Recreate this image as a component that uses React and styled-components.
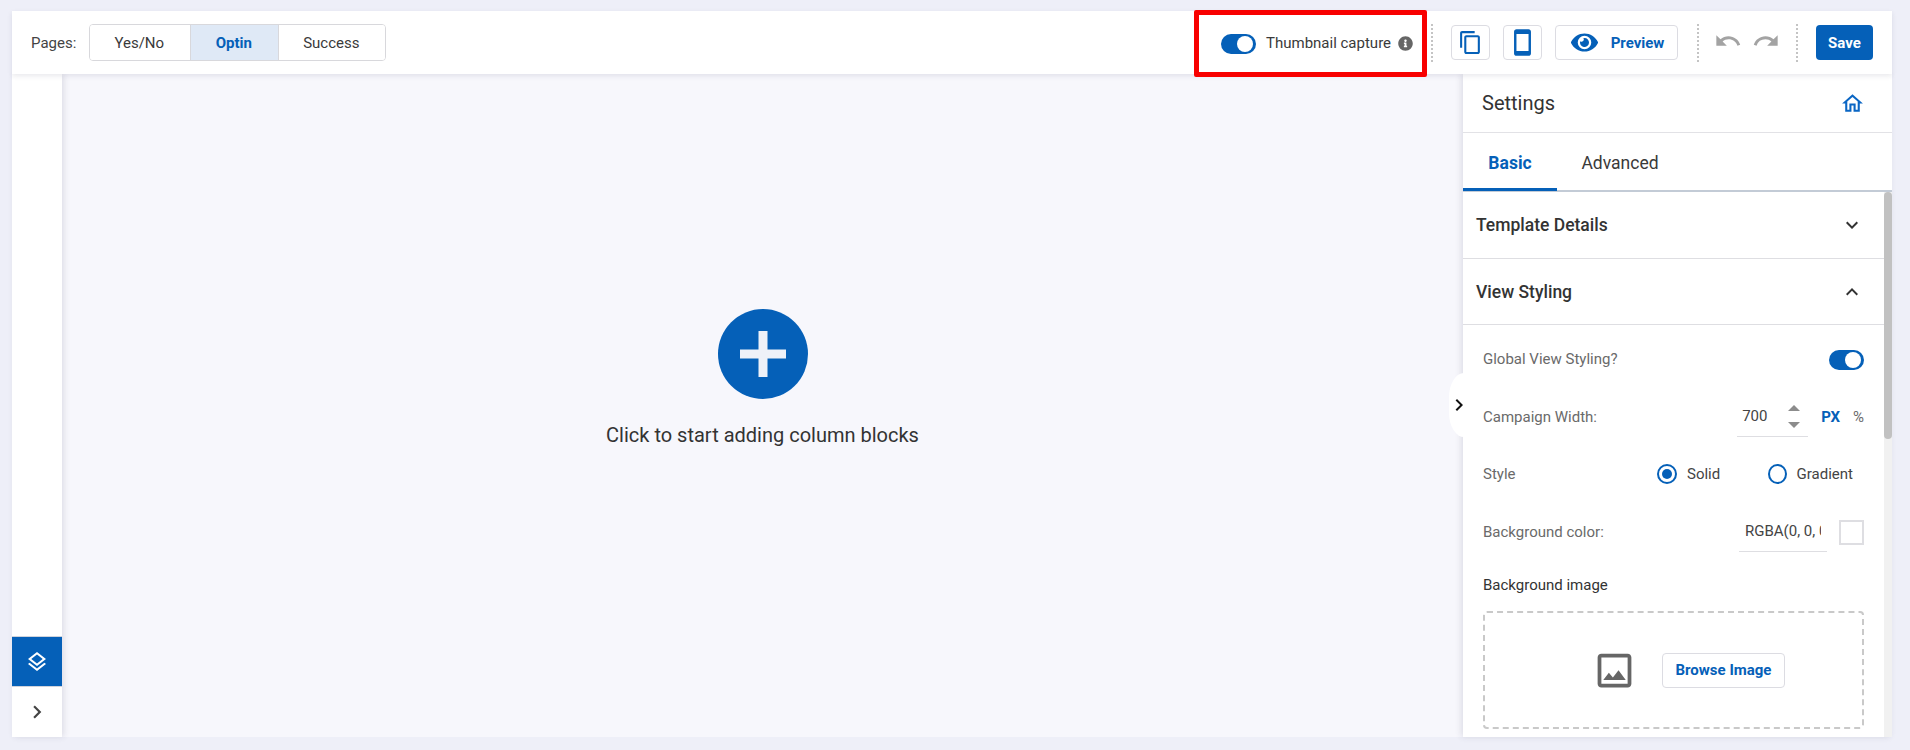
import React from "react";
import styled, { createGlobalStyle } from "styled-components";
import {
  MdContentCopy,
  MdSmartphone,
  MdUndo,
  MdRedo,
  MdOutlineHome,
  MdKeyboardArrowDown,
  MdKeyboardArrowUp,
  MdOutlineImage,
  MdChevronRight,
  MdOutlineLayers,
} from "react-icons/md";
import { FaEye, FaInfoCircle } from "react-icons/fa";

const GlobalStyle = createGlobalStyle`
  html, body {
    margin: 0;
    padding: 0;
    height: 100%;
    overflow: hidden;
  }
  body {
    font-family: Roboto, "Liberation Sans", sans-serif;
    background: #eeeff8;
    color: #333;
  }
  * { box-sizing: border-box; }
`;

const Page = styled.div`
  width: 1910px;
  height: 750px;
  padding: 11px 18px 13px 12px;
  display: flex;
  flex-direction: column;
`;

const TopBar = styled.header`
  height: 63px;
  flex: none;
  background: #fff;
  display: flex;
  align-items: center;
  padding: 0 19px;
  position: relative;
  z-index: 3;
  box-shadow: 0 2px 5px rgba(40, 40, 70, 0.1);
`;

const PagesLabel = styled.span`
  font-size: 15px;
  color: #444;
  margin-right: 13px;
`;

const Segments = styled.div`
  display: flex;
  height: 37px;
  border: 1px solid #d8d8dc;
  border-radius: 4px;
  overflow: hidden;
`;

const Segment = styled.div`
  width: ${(p) => p.$w}px;
  padding-right: 2px;
  display: flex;
  align-items: center;
  justify-content: center;
  font-size: 15px;
  color: ${(p) => (p.$active ? "#0560b8" : "#3a3a3a")};
  font-weight: ${(p) => (p.$active ? 700 : 400)};
  background: ${(p) => (p.$active ? "#dfe9f6" : "#fff")};
  border-left: ${(p) => (p.$first ? "none" : "1px solid #d8d8dc")};
`;

const RightTools = styled.div`
  margin-left: auto;
  display: flex;
  align-items: center;
`;

const ThumbGroup = styled.div`
  position: relative;
  width: 210px;
  display: flex;
  align-items: center;
  font-size: 15px;
  color: #3a3a3a;
  span + span {
    margin-left: 10px;
  }
  svg {
    color: #666;
    flex: none;
    margin-left: 7px;
    margin-top: 1px;
  }
`;

const Highlight = styled.div`
  position: absolute;
  left: -27px;
  top: -21px;
  width: 233px;
  height: 67px;
  border: 5px solid #f80000;
  border-radius: 2px;
  pointer-events: none;
`;

const Toggle = styled.span`
  width: 35px;
  height: 20px;
  margin-top: 3px;
  border-radius: 10px;
  background: #0560b8;
  position: relative;
  flex: none;
  &::after {
    content: "";
    position: absolute;
    right: 3px;
    top: 2px;
    width: 16px;
    height: 16px;
    border-radius: 50%;
    background: #fff;
  }
`;

const Dots = styled.span`
  width: 0;
  height: 38px;
  border-left: 2px dotted #c4c4c4;
  margin: ${(p) => p.$margin};
  flex: none;
`;

const ToolButton = styled.button`
  width: ${(p) => p.$w || 39}px;
  height: 35px;
  padding: 0 0 0 ${(p) => p.$pl || 0}px;
  margin-right: ${(p) => p.$mr || 0}px;
  background: #fff;
  border: 1px solid #dcdce2;
  border-radius: 4px;
  color: #0560b8;
  display: flex;
  align-items: center;
  justify-content: center;
  gap: 13px;
  font-family: inherit;
  font-size: 15px;
  font-weight: 700;
`;

const HistoryIcons = styled.div`
  display: flex;
  gap: 10px;
  color: #a3a3a3;
  margin-top: -4px;
`;

const SaveButton = styled.button`
  width: 57px;
  height: 35px;
  border: none;
  border-radius: 4px;
  background: #0560b8;
  color: #fff;
  font-family: inherit;
  font-size: 15px;
  font-weight: 700;
  padding: 0;
`;

const Body = styled.div`
  flex: 1;
  display: flex;
  min-height: 0;
`;

const LeftRail = styled.aside`
  width: 50px;
  flex: none;
  background: #fff;
  display: flex;
  flex-direction: column;
  justify-content: flex-end;
  box-shadow: 2px 0 6px rgba(40, 40, 70, 0.12);
  position: relative;
  z-index: 1;
`;

const RailButton = styled.div`
  height: ${(p) => (p.$active ? 51 : 50)}px;
  display: flex;
  align-items: center;
  justify-content: center;
  background: ${(p) => (p.$active ? "#0560b8" : "#fff")};
  color: ${(p) => (p.$active ? "#fff" : "#444")};
  border-top: ${(p) => (p.$active ? "1px solid #cfd3dc" : "none")};
  border-bottom: ${(p) => (p.$active ? "1px solid #cfd3dc" : "none")};
`;

const Canvas = styled.main`
  flex: 1;
  background: #f7f7fc;
  display: flex;
  flex-direction: column;
  align-items: center;
  padding-top: 235px;
`;

const AddCircle = styled.div`
  width: 90px;
  height: 90px;
  border-radius: 50%;
  background: #0560b8;
  display: flex;
  align-items: center;
  justify-content: center;
`;

const CanvasHint = styled.p`
  margin: 24px 0 0;
  font-size: 20px;
  line-height: 24px;
  color: #333;
`;

const SettingsPanel = styled.aside`
  width: 429px;
  flex: none;
  background: #fff;
  display: flex;
  flex-direction: column;
  position: relative;
  z-index: 2;
  box-shadow: -2px 0 6px rgba(40, 40, 70, 0.12);
`;

const CollapseHandle = styled.div`
  position: absolute;
  left: -14px;
  top: 299px;
  width: 15px;
  height: 64px;
  background: #fff;
  border-radius: 16px 0 0 16px / 26px 0 0 26px;
  display: flex;
  align-items: center;
  justify-content: center;
  color: #111;
  svg {
    flex: none;
    margin-left: 5px;
  }
`;

const PanelHead = styled.div`
  height: 59px;
  flex: none;
  display: flex;
  align-items: center;
  justify-content: space-between;
  padding: 0 27px 0 19px;
  border-bottom: 1px solid #e2e2e6;
  font-size: 20px;
  color: #333;
  svg {
    color: #0a66c4;
  }
`;

const Tabs = styled.div`
  height: 59px;
  flex: none;
  display: flex;
  border-bottom: 2px solid #c3cbd6;
`;

const Tab = styled.div`
  width: ${(p) => p.$w}px;
  height: 58px;
  padding-top: 4px;
  display: flex;
  align-items: center;
  justify-content: center;
  font-size: 17.5px;
  font-weight: ${(p) => (p.$active ? 700 : 400)};
  color: ${(p) => (p.$active ? "#0560b8" : "#3a3a3a")};
  border-bottom: 3px solid ${(p) => (p.$active ? "#0560b8" : "transparent")};
`;

const ScrollArea = styled.div`
  flex: 1;
  display: flex;
  min-height: 0;
`;

const PanelContent = styled.div`
  flex: 1;
  min-width: 0;
`;

const ScrollTrack = styled.div`
  width: 8px;
  flex: none;
  background: #f1f1f1;
`;

const ScrollThumb = styled.div`
  height: 247px;
  background: #c1c1c1;
  border-radius: 4px;
`;

const Accordion = styled.div`
  height: ${(p) => p.$h}px;
  display: flex;
  align-items: center;
  justify-content: space-between;
  padding: 0 20px 0 13px;
  border-bottom: 1px solid #dedee2;
  font-size: 17.5px;
  font-weight: 500;
  color: #333;
`;

const Fields = styled.div`
  padding: 0 20px;
`;

const Row = styled.div`
  height: ${(p) => p.$h}px;
  padding-top: ${(p) => p.$pt || 0}px;
  display: flex;
  align-items: center;
  justify-content: space-between;
`;

const FieldLabel = styled.span`
  font-size: 15px;
  color: ${(p) => (p.$dark ? "#333" : "#6a6a6a")};
`;

const Controls = styled.div`
  display: flex;
  align-items: center;
  margin-right: ${(p) => p.$mr || 0}px;
`;

const NumberBox = styled.div`
  width: 71px;
  height: 40px;
  border-bottom: 1px solid #dedee2;
  display: flex;
  align-items: center;
  justify-content: space-between;
  padding: 0 8px 0 5px;
  font-size: 15px;
  color: #444;
  margin-right: 13px;
`;

const Spinner = styled.div`
  display: flex;
  flex-direction: column;
  gap: 11px;
`;

const Arrow = styled.span`
  width: 0;
  height: 0;
  border-left: 6px solid transparent;
  border-right: 6px solid transparent;
  ${(p) =>
    p.$up ? "border-bottom: 6px solid #8c8c8c;" : "border-top: 6px solid #8c8c8c;"}
`;

const Unit = styled.span`
  font-size: 15px;
  font-weight: ${(p) => (p.$active ? 700 : 400)};
  color: ${(p) => (p.$active ? "#0560b8" : "#6a6a6a")};
  margin-left: ${(p) => p.$ml || 0}px;
`;

const RadioOption = styled.label`
  display: flex;
  align-items: center;
  gap: 10px;
  width: ${(p) => p.$w}px;
  font-size: 15px;
  color: #444;
`;

const Radio = styled.span`
  width: 20px;
  height: 20px;
  border-radius: 50%;
  border: 2px solid #0560b8;
  display: flex;
  align-items: center;
  justify-content: center;
  &::after {
    content: "";
    width: 10px;
    height: 10px;
    border-radius: 50%;
    background: ${(p) => (p.$on ? "#0560b8" : "transparent")};
  }
`;

const ColorValue = styled.div`
  width: 88px;
  height: 39px;
  padding: 0 6px;
  border-bottom: 1px solid #dedee2;
  margin-right: 12px;
`;

const ColorText = styled.div`
  font-size: 15px;
  line-height: 36px;
  color: #444;
  overflow: hidden;
  white-space: nowrap;
`;

const Swatch = styled.span`
  width: 25px;
  height: 25px;
  border: 2px solid #dedee2;
  background: #fff;
`;

const DropZone = styled.div`
  height: 118px;
  border: 2px dashed #c9c9c9;
  border-radius: 4px;
  display: flex;
  align-items: center;
  justify-content: center;
  gap: 25px;
  padding-left: 30px;
  svg {
    color: #666;
  }
`;

const BrowseButton = styled.button`
  width: 123px;
  height: 35px;
  padding: 0;
  background: #fff;
  border: 1px solid #dcdce2;
  border-radius: 4px;
  color: #0560b8;
  font-family: inherit;
  font-size: 15px;
  font-weight: 700;
`;

export default function App() {
  return (
    <>
      <GlobalStyle />
      <Page>
        <TopBar>
          <PagesLabel>Pages:</PagesLabel>
          <Segments>
            <Segment $w={100} $first>Yes/No</Segment>
            <Segment $w={88} $active>Optin</Segment>
            <Segment $w={107}>Success</Segment>
          </Segments>
          <RightTools>
            <ThumbGroup>
              <Toggle />
              <span>Thumbnail capture</span>
              <FaInfoCircle size={15} />
              <Highlight />
            </ThumbGroup>
            <Dots $margin="0 18px 0 0" />
            <ToolButton $mr={13}>
              <MdContentCopy size={25} />
            </ToolButton>
            <ToolButton $mr={13}>
              <MdSmartphone size={29} />
            </ToolButton>
            <ToolButton $w={123} $mr={19} $pl={2}>
              <FaEye size={27} />
              Preview
            </ToolButton>
            <Dots $margin="0 15px 0 0" />
            <HistoryIcons>
              <MdUndo size={28} />
              <MdRedo size={28} />
            </HistoryIcons>
            <Dots $margin="0 18px 0 16px" />
            <SaveButton>Save</SaveButton>
          </RightTools>
        </TopBar>
        <Body>
          <LeftRail>
            <RailButton $active>
              <MdOutlineLayers size={24} />
            </RailButton>
            <RailButton>
              <MdChevronRight size={26} />
            </RailButton>
          </LeftRail>
          <Canvas>
            <AddCircle>
              <svg width="46" height="46" viewBox="0 0 46 46">
                <path d="M18.5 0h9v18.500h18.500v9H27.500v18.500h-9V27.500H0v-9h18.500z" fill="#eef1f8" />
              </svg>
            </AddCircle>
            <CanvasHint>Click to start adding column blocks</CanvasHint>
          </Canvas>
          <SettingsPanel>
            <CollapseHandle>
              <MdChevronRight size={24} />
            </CollapseHandle>
            <PanelHead>
              Settings
              <MdOutlineHome size={25} />
            </PanelHead>
            <Tabs>
              <Tab $w={94} $active>Basic</Tab>
              <Tab $w={126}>Advanced</Tab>
            </Tabs>
            <ScrollArea>
              <PanelContent>
                <Accordion $h={67}>
                  Template Details
                  <MdKeyboardArrowDown size={24} />
                </Accordion>
                <Accordion $h={66}>
                  View Styling
                  <MdKeyboardArrowUp size={24} />
                </Accordion>
                <Fields>
                  <Row $h={67}>
                    <FieldLabel>Global View Styling?</FieldLabel>
                    <Toggle />
                  </Row>
                  <Row $h={49}>
                    <FieldLabel>Campaign Width:</FieldLabel>
                    <Controls>
                      <NumberBox>
                        700
                        <Spinner>
                          <Arrow $up />
                          <Arrow />
                        </Spinner>
                      </NumberBox>
                      <Unit $active>PX</Unit>
                      <Unit $ml={13}>%</Unit>
                    </Controls>
                  </Row>
                  <Row $h={66}>
                    <FieldLabel>Style</FieldLabel>
                    <Controls $mr={11}>
                      <RadioOption $w={111}>
                        <Radio $on />
                        Solid
                      </RadioOption>
                      <RadioOption $w={85}>
                        <Radio />
                        Gradient
                      </RadioOption>
                    </Controls>
                  </Row>
                  <Row $h={50}>
                    <FieldLabel>Background color:</FieldLabel>
                    <Controls>
                      <ColorValue>
                        <ColorText>RGBA(0, 0, 0, 0)</ColorText>
                      </ColorValue>
                      <Swatch />
                    </Controls>
                  </Row>
                  <Row $h={54} $pt={2}>
                    <FieldLabel $dark>Background image</FieldLabel>
                  </Row>
                  <DropZone>
                    <MdOutlineImage size={45} />
                    <BrowseButton>Browse Image</BrowseButton>
                  </DropZone>
                </Fields>
              </PanelContent>
              <ScrollTrack>
                <ScrollThumb />
              </ScrollTrack>
            </ScrollArea>
          </SettingsPanel>
        </Body>
      </Page>
    </>
  );
}
